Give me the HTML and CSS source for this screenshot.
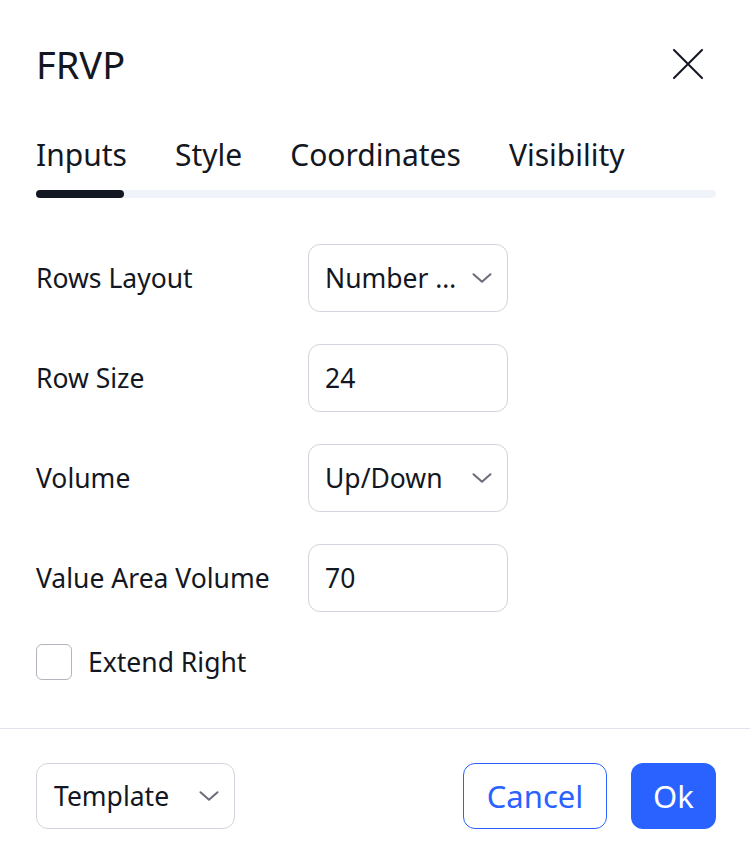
FILE: index.html
```html
<!DOCTYPE html>
<html lang="en">
<head>
<meta charset="utf-8">
<title>FRVP</title>
<link rel="stylesheet" href="styles.css">
</head>
<body>
<div class="dialog">
  <div class="header">
    <div class="title">FRVP</div>
    <button class="close" aria-label="Close">
      <svg width="30" height="30" viewBox="0 0 30 30"><path d="M1 1L29 29M29 1L1 29" stroke="#131722" stroke-width="2" fill="none" stroke-linecap="round"/></svg>
    </button>
  </div>

  <div class="tabs">
    <div class="tab-row">
      <div class="tab active">Inputs</div>
      <div class="tab">Style</div>
      <div class="tab">Coordinates</div>
      <div class="tab">Visibility</div>
    </div>
    <div class="track"><div class="indicator"></div></div>
  </div>

  <div class="form">
    <div class="row">
      <div class="label">Rows Layout</div>
      <div class="field select">
        <span class="value">Number …</span>
        <svg class="chev" width="20" height="10" viewBox="0 0 20 10"><path d="M1.5 1.2L10 8.8L18.5 1.2" stroke="#6a6d78" stroke-width="2" fill="none" stroke-linecap="round" stroke-linejoin="round"/></svg>
      </div>
    </div>
    <div class="row">
      <div class="label">Row Size</div>
      <div class="field"><span class="value">24</span></div>
    </div>
    <div class="row">
      <div class="label">Volume</div>
      <div class="field select">
        <span class="value">Up/Down</span>
        <svg class="chev" width="20" height="10" viewBox="0 0 20 10"><path d="M1.5 1.2L10 8.8L18.5 1.2" stroke="#6a6d78" stroke-width="2" fill="none" stroke-linecap="round" stroke-linejoin="round"/></svg>
      </div>
    </div>
    <div class="row">
      <div class="label">Value Area Volume</div>
      <div class="field"><span class="value">70</span></div>
    </div>
    <div class="check-row">
      <span class="checkbox"></span>
      <span class="check-label">Extend Right</span>
    </div>
  </div>

  <div class="separator"></div>

  <div class="footer">
    <div class="template">
      <span class="value">Template</span>
      <svg class="chev" width="20" height="10" viewBox="0 0 20 10"><path d="M1.5 1.2L10 8.8L18.5 1.2" stroke="#6a6d78" stroke-width="2" fill="none" stroke-linecap="round" stroke-linejoin="round"/></svg>
    </div>
    <div class="buttons">
      <button class="btn cancel">Cancel</button>
      <button class="btn ok">Ok</button>
    </div>
  </div>
</div>
</body>
</html>
```
FILE: styles.css
```css
* { box-sizing: border-box; }
html, body { margin: 0; padding: 0; background: #ffffff; }
body {
  font-family: "Noto Sans", "DejaVu Sans", sans-serif;
  color: #131722;
}
.dialog { width: 750px; }

.header {
  display: flex;
  align-items: center;
  justify-content: space-between;
  padding: 40px 34px 0 36px;
  height: 88px;
}
.title {
  font-size: 38px;
  line-height: 48px;
  font-weight: 400;
}
.close {
  width: 30px;
  height: 30px;
  margin-right: 13px;
  padding: 0;
  border: 0;
  background: none;
  display: flex;
}

.tabs {
  padding: 47px 34px 0 36px;
}
.tab-row {
  display: flex;
  gap: 48px;
}
.tab {
  font-size: 30px;
  line-height: 40px;
  white-space: nowrap;
}
.track {
  margin-top: 15px;
  height: 8px;
  border-radius: 4px;
  background: #f0f3fa;
  display: flex;
}
.indicator {
  width: 88px;
  height: 8px;
  border-radius: 4px;
  background: #131722;
}

.form {
  padding: 46px 34px 0 36px;
  display: flex;
  flex-direction: column;
  gap: 32px;
}
.row {
  display: flex;
  align-items: center;
  height: 68px;
}
.label {
  width: 272px;
  font-size: 26.5px;
  line-height: 36px;
}
.field {
  width: 200px;
  height: 68px;
  border: 1px solid #d1d4dc;
  border-radius: 12px;
  display: flex;
  align-items: center;
  padding: 0 15px 0 16px;
  font-size: 26.5px;
}
.value {
  flex: 1;
  min-width: 0;
  white-space: nowrap;
  line-height: 36px;
}
.select .value { margin-right: 8px; }
.chev { flex: none; }

.check-row {
  display: flex;
  align-items: center;
  gap: 16px;
  height: 36px;
}
.checkbox {
  width: 36px;
  height: 36px;
  border: 1.5px solid #b2b5be;
  border-radius: 6px;
}
.check-label {
  font-size: 26.5px;
  line-height: 36px;
}

.separator {
  margin-top: 48px;
  height: 1px;
  background: #e0e3eb;
}

.footer {
  display: flex;
  justify-content: space-between;
  align-items: center;
  padding: 34px 34px 0 36px;
}
.template {
  width: 199px;
  height: 66px;
  border: 1px solid #d1d4dc;
  border-radius: 12px;
  display: flex;
  align-items: center;
  padding: 0 15px 0 17px;
  font-size: 26.5px;
}
.buttons {
  display: flex;
  gap: 24px;
}
.btn {
  height: 66px;
  border-radius: 12px;
  font-family: "Noto Sans", "DejaVu Sans", sans-serif;
  font-size: 31px;
  line-height: 40px;
  padding: 0;
  cursor: pointer;
}
.cancel {
  width: 144px;
  background: #ffffff;
  border: 1.5px solid #2962ff;
  color: #2962ff;
}
.ok {
  width: 85px;
  background: #2962ff;
  border: 0;
  color: #ffffff;
}
```
